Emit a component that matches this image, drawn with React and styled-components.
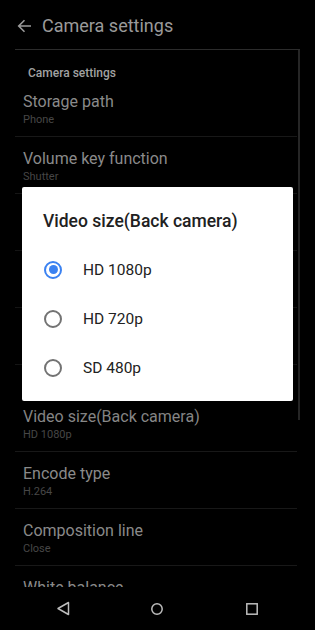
import React from "react";
import styled, { createGlobalStyle } from "styled-components";

const GlobalStyle = createGlobalStyle`
  html, body { margin: 0; padding: 0; background: #000; }
  body { font-family: Roboto, "Noto Sans", Arial, sans-serif; -webkit-font-smoothing: antialiased; }
  * { box-sizing: border-box; }
`;

const Screen = styled.div`
  position: relative;
  width: 315px;
  height: 630px;
  background: #000;
  overflow: hidden;
  display: flex;
  flex-direction: column;
`;

const AppBar = styled.div`
  height: 49px;
  flex: none;
  display: flex;
  align-items: center;
  padding: 2px 0 0 17px;
  gap: 10px;
`;

const AppTitle = styled.div`
  font-size: 18px;
  line-height: 24px;
  color: #9a9a9a;
`;

const Content = styled.div`
  position: relative;
  flex: 1;
  min-height: 0;
  margin: 0 15px;
  border-top: 1px solid #2c2c2c;
  overflow: hidden;
`;

const ScrollIndicator = styled.div`
  position: absolute;
  right: 0;
  top: 0;
  width: 2px;
  height: 370px;
  background: #262626;
`;

const Category = styled.div`
  height: 30px;
  padding: 16px 0 0 13px;
  font-size: 12px;
  line-height: 14px;
  font-weight: 500;
  color: #a2a2a2;
`;

const Item = styled.div`
  height: 57px;
  padding: 12px 0 0 8px;
  margin-right: 3px;
  border-bottom: 1px solid #181818;
`;

const ItemTitle = styled.div`
  font-size: 16px;
  line-height: 20px;
  color: #8a8a8a;
`;

const ItemSummary = styled.div`
  margin-top: 0;
  font-size: 11px;
  line-height: 16px;
  color: #474747;
`;

const NavBar = styled.div`
  height: 43px;
  flex: none;
  display: grid;
  grid-template-columns: repeat(3, 1fr);
  padding: 0 16px;
  align-items: center;
  justify-items: center;
  background: #000;
`;

const NavButton = styled.div`
  display: flex;
  align-items: center;
  justify-content: center;
  width: 24px;
  height: 24px;
`;

const Dialog = styled.div`
  position: absolute;
  left: 22px;
  top: 187px;
  width: 271px;
  height: 214px;
  background: #fff;
  border-radius: 2px;
  padding: 23px 0 0 0;
  box-shadow: 0 4px 16px rgba(0, 0, 0, 0.5);
`;

const DialogTitle = styled.div`
  padding-left: 21px;
  font-size: 17.5px;
  line-height: 22px;
  font-weight: 500;
  color: #212121;
`;

const Options = styled.div`
  margin-top: 13px;
  display: flex;
  flex-direction: column;
`;

const Option = styled.div`
  height: 49px;
  display: flex;
  align-items: center;
  padding-left: 22px;
  gap: 21px;
`;

const Radio = styled.div`
  width: 18px;
  height: 18px;
  border-radius: 50%;
  border: 2px solid ${(p) => (p.$checked ? "#3b82f1" : "#737373")};
  display: flex;
  align-items: center;
  justify-content: center;
  &::after {
    content: "";
    width: 9px;
    height: 9px;
    border-radius: 50%;
    background: #3b82f1;
    display: ${(p) => (p.$checked ? "block" : "none")};
  }
`;

const OptionLabel = styled.div`
  font-size: 15.5px;
  line-height: 20px;
  color: #222;
`;

const items = [
  { category: "Camera settings" },
  { title: "Storage path", summary: "Phone" },
  { title: "Volume key function", summary: "Shutter" },
  { title: "Shutter sound", summary: "On" },
  { title: "Location tag", summary: "Off" },
  { title: "Self-timer", summary: "Off" },
  { category: "Video settings" },
  { title: "Video size(Back camera)", summary: "HD 1080p" },
  { title: "Encode type", summary: "H.264" },
  { title: "Composition line", summary: "Close" },
  { title: "White balance", summary: "Auto" },
];

const options = ["HD 1080p", "HD 720p", "SD 480p"];

export default function App() {
  return (
    <Screen>
      <GlobalStyle />
      <AppBar>
        <svg width="15" height="14" viewBox="0 0 15 14" fill="none">
          <path d="M14 7H2M7.5 1.2L1.7 7l5.8 5.8" stroke="#9a9a9a" strokeWidth="1.6" />
        </svg>
        <AppTitle>Camera settings</AppTitle>
      </AppBar>
      <Content>
        <ScrollIndicator />
        {items.map((it, i) =>
          it.category ? (
            <Category key={i}>{it.category}</Category>
          ) : (
            <Item key={i}>
              <ItemTitle>{it.title}</ItemTitle>
              <ItemSummary>{it.summary}</ItemSummary>
            </Item>
          )
        )}
      </Content>
      <NavBar>
        <NavButton>
          <svg width="15" height="15" viewBox="0 0 15 15" fill="none">
            <path d="M12.5 1.5v12L2 7.5z" stroke="#bdbdbd" strokeWidth="1.5" strokeLinejoin="round" />
          </svg>
        </NavButton>
        <NavButton>
          <svg width="14" height="14" viewBox="0 0 14 14" fill="none">
            <circle cx="7" cy="7" r="5.2" stroke="#bdbdbd" strokeWidth="1.5" />
          </svg>
        </NavButton>
        <NavButton>
          <svg width="14" height="14" viewBox="0 0 14 14" fill="none">
            <rect x="1.8" y="1.8" width="10.4" height="10.4" stroke="#bdbdbd" strokeWidth="1.5" />
          </svg>
        </NavButton>
      </NavBar>
      <Dialog>
        <DialogTitle>Video size(Back camera)</DialogTitle>
        <Options>
          {options.map((o, i) => (
            <Option key={o}>
              <Radio $checked={i === 0} />
              <OptionLabel>{o}</OptionLabel>
            </Option>
          ))}
        </Options>
      </Dialog>
    </Screen>
  );
}
